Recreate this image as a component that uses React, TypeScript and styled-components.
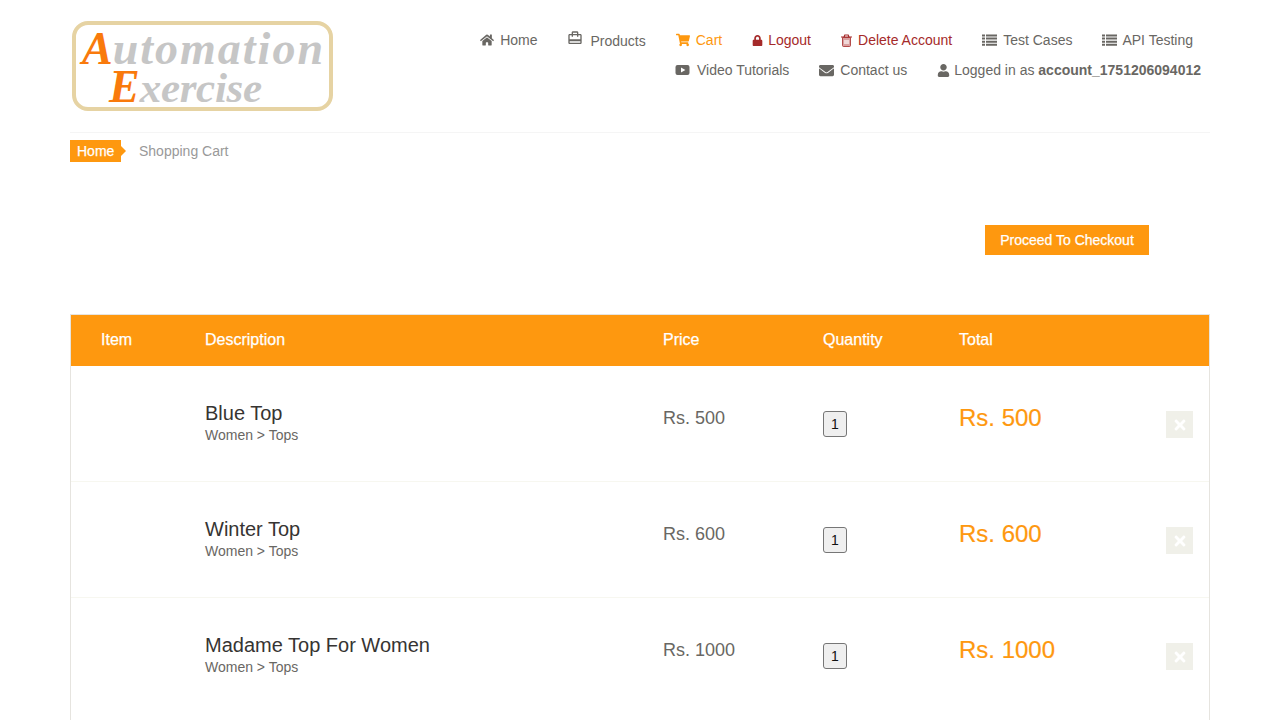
import React from "react";
import styled, { createGlobalStyle } from "styled-components";
import { FaHome, FaShoppingCart, FaLock, FaEnvelope, FaUser, FaTimes } from "react-icons/fa";
import { MdCardTravel } from "react-icons/md";

const Global = createGlobalStyle`
  html, body { margin: 0; padding: 0; background: #fff; overflow: hidden; height: 720px; }
  body { font-family: "Liberation Sans", Arial, sans-serif; color: #696763; font-size: 14px; }
`;

const Page = styled.div`
  width: 1140px;
  margin: 0 auto;
`;

const Header = styled.header`
  display: flex;
  justify-content: space-between;
  height: 132px;
  border-bottom: 1px solid #f5f5f5;
`;

const LogoFrame = styled.div`
  width: 253px;
  height: 82px;
  margin: 21px 0 0 2px;
  border: 4px solid #e6d3a3;
  border-radius: 16px;
  background: #fff;
  position: relative;
  font-family: "Liberation Serif", serif;
  font-style: italic;
  font-weight: 700;
  color: #c6c6c6;
`;

const LogoLine = styled.div<{ $left: number; $top: number; $size: number; $spacing: number }>`
  position: absolute;
  left: ${(p) => p.$left}px;
  top: ${(p) => p.$top}px;
  font-size: ${(p) => p.$size}px;
  letter-spacing: ${(p) => p.$spacing}px;
  line-height: 38px;
  white-space: nowrap;
`;

const LogoCap = styled.span`
  color: #f97a0c;
  font-size: 46px;
  letter-spacing: 0;
`;

const Nav = styled.nav`
  display: flex;
  flex-direction: column;
  align-items: flex-end;
  padding-top: 30px;
`;

const NavRow = styled.div<{ $right: number }>`
  display: flex;
  gap: 30px;
  height: 30px;
  padding-right: ${(p) => p.$right}px;
`;

const NavLink = styled.a<{ $color?: string; $gap?: number }>`
  display: flex;
  align-items: center;
  height: 20px;
  gap: ${(p) => p.$gap ?? 6}px;
  color: ${(p) => p.$color || "#696763"};
  font-size: 14px;
  line-height: 20px;
  white-space: nowrap;
  svg { flex: none; }
  b { font-weight: 700; }
`;

const DropText = styled.span`
  position: relative;
  top: 1px;
`;

const RaisedIcon = styled.span`
  display: flex;
  position: relative;
  top: -2px;
`;

const Crumbs = styled.div`
  display: flex;
  align-items: center;
  height: 22px;
  margin-top: 7px;
`;

const CrumbHome = styled.a`
  position: relative;
  background: #fe980f;
  color: #fff;
  width: 51px;
  height: 22px;
  line-height: 22px;
  padding-left: 7px;
  box-sizing: border-box;
  -webkit-text-stroke: 0.25px #fff;
  &::after {
    content: "";
    position: absolute;
    left: 51px;
    top: 6px;
    border-left: 5px solid #fe980f;
    border-top: 5px solid transparent;
    border-bottom: 5px solid transparent;
  }
`;

const CrumbCurrent = styled.span`
  color: #999;
  margin-left: 18px;
`;

const CheckoutRow = styled.div`
  display: flex;
  justify-content: flex-end;
  padding: 63px 61px 59px 0;
`;

const CheckoutButton = styled.a`
  display: block;
  width: 164px;
  height: 30px;
  line-height: 30px;
  text-align: center;
  background: #fe980f;
  color: #fff;
  font-size: 14px;
  -webkit-text-stroke: 0.25px #fff;
`;

const Table = styled.div`
  border: 1px solid #e6e4df;
  border-bottom: 0;
  padding-bottom: 30px;
`;

const Row = styled.div`
  display: grid;
  grid-template-columns: 134px 458px 160px 136px 1fr 43px;
`;

const HeadRow = styled(Row)`
  background: #fe980f;
  height: 51px;
  box-sizing: border-box;
  padding-bottom: 2px;
  align-items: center;
  color: #fff;
  font-size: 16px;
  -webkit-text-stroke: 0.25px #fff;
`;

const HeadFirst = styled.div`
  padding-left: 30px;
`;

const ItemRow = styled(Row)`
  height: 116px;
  border-bottom: 1px solid #f7f7f0;
  box-sizing: border-box;
  &:last-child { border-bottom: 0; }
`;

const Desc = styled.div`
  padding-top: 35px;
`;

const Name = styled.div`
  color: #363432;
  font-size: 20px;
  line-height: 24px;
`;

const Category = styled.div`
  color: #696763;
  font-size: 14px;
  line-height: 20px;
`;

const Price = styled.div`
  font-size: 18px;
  line-height: 20px;
  padding-top: 42px;
  color: #696763;
`;

const QtyCell = styled.div`
  padding-top: 45px;
`;

const Qty = styled.button`
  width: 24px;
  height: 26px;
  padding: 0;
  font: 14px "Liberation Sans", Arial, sans-serif;
  color: #111;
  background: #efefef;
  border: 1px solid #767676;
  border-radius: 3px;
`;

const Total = styled.div`
  color: #fe980f;
  font-size: 24px;
  line-height: 28px;
  padding-top: 38px;
  -webkit-text-stroke: 0.2px #fe980f;
`;

const DeleteCell = styled.div`
  padding-top: 45px;
`;

const Delete = styled.a`
  display: flex;
  align-items: center;
  justify-content: center;
  width: 27px;
  height: 27px;
  background: #f0f0e9;
  color: #fff;
`;

const items = [
  { name: "Blue Top", price: "Rs. 500" },
  { name: "Winter Top", price: "Rs. 600" },
  { name: "Madame Top For Women", price: "Rs. 1000" },
];

const Play = () => (
  <svg width="15" height="14" viewBox="0 0 15 14" fill="#696763">
    <path fillRule="evenodd" d="M2.5 2h10A2 2 0 0 1 14.5 4v6a2 2 0 0 1-2 2h-10a2 2 0 0 1-2-2V4a2 2 0 0 1 2-2zM6 4.4v5.2L10.4 7z" />
  </svg>
);

const ListIcon = () => (
  <svg width="15" height="14" viewBox="0 0 15 14" fill="#696763">
    <path d="M0 1.5h3v2H0zM4 1.5h11v2H4zM0 4.6h3v2H0zM4 4.6h11v2H4zM0 7.7h3v2H0zM4 7.7h11v2H4zM0 10.8h3v2H0zM4 10.8h11v2H4z" />
  </svg>
);

const TrashIcon = () => (
  <svg width="11" height="13" viewBox="0 0 11 13">
    <path d="M1.5 3.5h8v8a1 1 0 0 1-1 1h-6a1 1 0 0 1-1-1z" fill="#d9a0a0" stroke="#a52a2a" strokeWidth="0.8" />
    <path d="M3 6h5v4H3z" fill="#f0d8d8" />
    <path d="M0 3h11M3 3l.8-2h3.4L8 3" fill="none" stroke="#a52a2a" strokeWidth="1.2" />
  </svg>
);

export default function App() {
  return (
    <Page>
      <Global />
      <Header>
        <LogoFrame>
          <LogoLine $left={6} $top={5} $size={46} $spacing={2}><LogoCap>A</LogoCap>utomation</LogoLine>
          <LogoLine $left={33} $top={43} $size={43} $spacing={-0.3}><LogoCap>E</LogoCap>xercise</LogoLine>
        </LogoFrame>
        <Nav>
          <NavRow $right={17}>
            <NavLink><FaHome size={14} />Home</NavLink>
            <NavLink $gap={7}><RaisedIcon><MdCardTravel size={16} /></RaisedIcon><DropText>Products</DropText></NavLink>
            <NavLink $color="#fe980f"><FaShoppingCart size={14} />Cart</NavLink>
            <NavLink $color="#a52a2a" $gap={5}><FaLock size={11} />Logout</NavLink>
            <NavLink $color="#a52a2a"><TrashIcon />Delete Account</NavLink>
            <NavLink><ListIcon />Test Cases</NavLink>
            <NavLink $gap={5}><ListIcon />API Testing</NavLink>
          </NavRow>
          <NavRow $right={9}>
            <NavLink $gap={7}><Play />Video Tutorials</NavLink>
            <NavLink><FaEnvelope size={15} />Contact us</NavLink>
            <NavLink $gap={4}><FaUser size={13} /><span>Logged in as <b>account_1751206094012</b></span></NavLink>
          </NavRow>
        </Nav>
      </Header>
      <Crumbs>
        <CrumbHome>Home</CrumbHome>
        <CrumbCurrent>Shopping Cart</CrumbCurrent>
      </Crumbs>
      <CheckoutRow>
        <CheckoutButton>Proceed To Checkout</CheckoutButton>
      </CheckoutRow>
      <Table>
        <HeadRow>
          <HeadFirst>Item</HeadFirst>
          <div>Description</div>
          <div>Price</div>
          <div>Quantity</div>
          <div>Total</div>
          <div />
        </HeadRow>
        {items.map((it) => (
          <ItemRow key={it.name}>
            <div />
            <Desc>
              <Name>{it.name}</Name>
              <Category>Women &gt; Tops</Category>
            </Desc>
            <Price>{it.price}</Price>
            <QtyCell><Qty>1</Qty></QtyCell>
            <Total>{it.price}</Total>
            <DeleteCell><Delete><FaTimes size={16} /></Delete></DeleteCell>
          </ItemRow>
        ))}
      </Table>
    </Page>
  );
}
